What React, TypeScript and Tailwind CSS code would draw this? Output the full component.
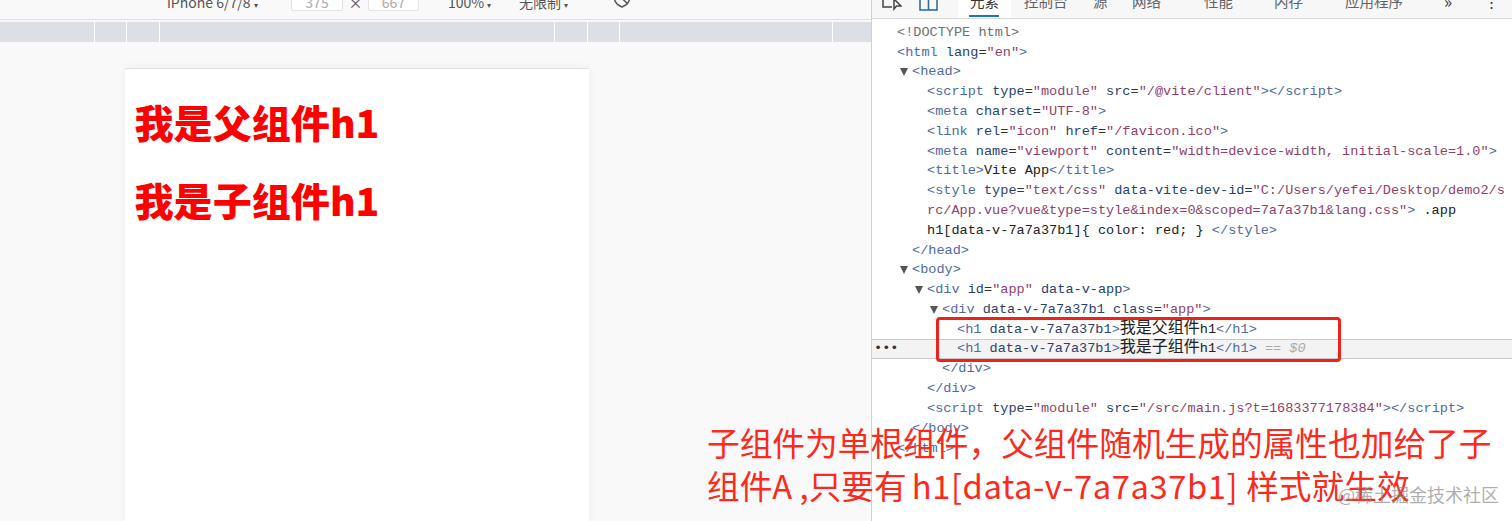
import React from "react";

const T = ({ children }: { children: React.ReactNode }) => <span className="text-[#4f6aa3]">{children}</span>;
const A = ({ children }: { children: React.ReactNode }) => <span className="text-[#2a3f6e]">{children}</span>;
const V = ({ children }: { children: React.ReactNode }) => <span className="text-[#8f3f6b]">{children}</span>;
const G = ({ children }: { children: React.ReactNode }) => <span className="text-[#6f6f6f]">{children}</span>;
const C = ({ children }: { children: React.ReactNode }) => <span className="text-[#222222]">{children}</span>;
const K = ({ children }: { children: React.ReactNode }) => <span className="text-[16px] leading-none text-[#222222]">{children}</span>;

function Row({ pad, open, selected, children }: { pad: string; open?: boolean; selected?: boolean; children: React.ReactNode }) {
  return (
    <div className={"relative flex h-[19.8px] items-center whitespace-pre " + pad + (selected ? " -mt-[1px] mb-[1px] border-y border-[#c9c9c9] bg-[#f3f3f3]" : "")}>
      {open && <span className="mr-[4px] -ml-[12px] h-0 w-0 border-x-[4px] border-t-[8px] border-x-transparent border-t-[#555555]" />}
      <span className="leading-[18px]">{children}</span>
    </div>
  );
}

function Ruler() {
  const ticks = ["w-[95px]", "w-[32px]", "w-[33px]", "w-[395px]", "w-[33px]", "w-[32px]", "w-[213px]", "flex-1"];
  return (
    <div className="mt-[2px] flex h-[20px] bg-[#dce0e6]">
      {ticks.map((w, i) => (
        <div key={i} className={w + (i < ticks.length - 1 ? " border-r border-white" : "")} />
      ))}
    </div>
  );
}

function Toolbar() {
  return (
    <div className="h-[20px] overflow-hidden border-b border-[#dedede] bg-[#f9f9f9]">
      <div className="-mt-[7px] flex h-[18px] items-center text-[14px] text-[#555555]">
        <span className="ml-[167px] w-[124px]">iPhone 6/7/8 <span className="text-[8px]">▾</span></span>
        <span className="flex h-[17px] w-[52px] items-center justify-center rounded-[2px] border border-[#e3e3e3] bg-white text-[#aaaaaa]">375</span>
        <span className="w-[25px] text-center">×</span>
        <span className="flex h-[17px] w-[51px] items-center justify-center rounded-[2px] border border-[#e3e3e3] bg-white text-[#aaaaaa]">667</span>
        <span className="ml-[29px] w-[71px]">100% <span className="text-[8px]">▾</span></span>
        <span className="w-[94px]">无限制 <span className="text-[8px]">▾</span></span>
        <svg className="-mt-[6px]" width="18" height="18" viewBox="0 0 18 18" fill="none" stroke="#555555" strokeWidth="1.5">
          <path d="M1 6 9 1l8 5c0 5-3 9-8 11C4 15 1 11 1 6z" />
          <path d="M3 3l12 11" />
        </svg>
      </div>
    </div>
  );
}

function DevTabs() {
  return (
    <div className="flex h-[19px] shrink-0 overflow-hidden border-b border-[#d8d8d8] bg-[#f7f7f7] text-[14.5px] text-[#5f6368]">
      <div className="-mt-[11px] flex h-[24px] w-full items-center">
        <svg className="ml-[10px]" width="20" height="20" viewBox="0 0 20 20" fill="none" stroke="#444444" strokeWidth="1.5">
          <path d="M1 4v12h9" />
          <path d="M12 8v10l2.500-3h4.500z" fill="#ffffff" />
        </svg>
        <svg className="ml-[17px]" width="19" height="20" viewBox="0 0 19 20" fill="none" stroke="#2f6f9f" strokeWidth="1.6">
          <rect x="1" y="1" width="17" height="18" />
          <path d="M9.500 1v18" />
        </svg>
        <div className="relative ml-[20px] h-[30px] w-[53px] self-start bg-white text-center leading-[24px] text-[#333333]">
          元素
          <span className="absolute bottom-[2px] left-[11px] h-[2px] w-[30px] bg-[#1a73c8]" />
        </div>
        <span className="ml-[13px]">控制台</span>
        <span className="ml-[25.5px]">源</span>
        <span className="ml-[24.5px]">网络</span>
        <span className="ml-[43px]">性能</span>
        <span className="ml-[41px]">内存</span>
        <span className="ml-[42px]">应用程序</span>
        <span className="ml-[41px] text-[17px] text-[#333333]">»</span>
        <span className="ml-[32px] text-[#333333]">⋮</span>
      </div>
    </div>
  );
}

export default function App() {
  return (
    <div className="relative flex h-[521px] w-[1512px] overflow-hidden bg-white font-['Noto_Sans_CJK_SC',sans-serif]">
      <div className="flex w-[871px] shrink-0 flex-col bg-[#f9f9f9]">
        <Toolbar />
        <Ruler />
        <div className="flex flex-1 justify-start pl-[125px] pt-[26px]">
          <div className="w-[464px] border-t border-[#e0e0e0] bg-white px-[9.500px] pt-[23px] text-[39.100px] font-black leading-[58px] text-[#ff0000] shadow-[0_0_8px_rgba(0,0,0,0.06)]">
            <h1>我是父组件h1</h1>
            <h1 className="mt-[20px]">我是子组件h1</h1>
          </div>
        </div>
      </div>

      <div className="flex min-w-0 flex-1 flex-col border-l border-[#d0d0d0]">
        <DevTabs />
        <div className="pt-[4px] font-['Liberation_Mono','Noto_Sans_CJK_SC',monospace] text-[13.570px] text-[#333333]">
          <Row pad="pl-[25px]"><G>{"<!DOCTYPE html>"}</G></Row>
          <Row pad="pl-[25px]"><T>{"<html"}</T> <A>lang</A>=<V>"en"</V><T>{">"}</T></Row>
          <Row pad="pl-[40px]" open><T>{"<head>"}</T></Row>
          <Row pad="pl-[55px]"><T>{"<script"}</T> <A>type</A>=<V>"module"</V> <A>src</A>=<V>"/@vite/client"</V><T>{"></script>"}</T></Row>
          <Row pad="pl-[55px]"><T>{"<meta"}</T> <A>charset</A>=<V>"UTF-8"</V><T>{">"}</T></Row>
          <Row pad="pl-[55px]"><T>{"<link"}</T> <A>rel</A>=<V>"icon"</V> <A>href</A>=<V>"/favicon.ico"</V><T>{">"}</T></Row>
          <Row pad="pl-[55px]"><T>{"<meta"}</T> <A>name</A>=<V>"viewport"</V> <A>content</A>=<V>"width=device-width, initial-scale=1.0"</V><T>{">"}</T></Row>
          <Row pad="pl-[55px]"><T>{"<title>"}</T><C>Vite App</C><T>{"</title>"}</T></Row>
          <Row pad="pl-[55px]"><T>{"<style"}</T> <A>type</A>=<V>"text/css"</V> <A>data-vite-dev-id</A>=<V>"C:/Users/yefei/Desktop/demo2/s</V></Row>
          <Row pad="pl-[55px]"><V>rc/App.vue?vue&amp;type=style&amp;index=0&amp;scoped=7a7a37b1&amp;lang.css"</V><T>{">"}</T><C> .app</C></Row>
          <Row pad="pl-[55px]"><C>{"h1[data-v-7a7a37b1]{ color: red; } "}</C><T>{"</style>"}</T></Row>
          <Row pad="pl-[40px]"><T>{"</head>"}</T></Row>
          <Row pad="pl-[40px]" open><T>{"<body>"}</T></Row>
          <Row pad="pl-[55px]" open><T>{"<div"}</T> <A>id</A>=<V>"app"</V> <A>data-v-app</A><T>{">"}</T></Row>
          <Row pad="pl-[70px]" open><T>{"<div"}</T> <A>data-v-7a7a37b1</A> <A>class</A>=<V>"app"</V><T>{">"}</T></Row>
          <Row pad="pl-[85px]"><T>{"<h1"}</T> <A>data-v-7a7a37b1</A><T>{">"}</T><K>我是父组件</K><C>h1</C><T>{"</h1>"}</T></Row>
          <Row pad="pl-[85px]" selected>
            <span className="absolute left-[2px] text-[#333333]">•••</span>
            <T>{"<h1"}</T> <A>data-v-7a7a37b1</A><T>{">"}</T><K>我是子组件</K><C>h1</C><T>{"</h1>"}</T><span className="italic text-[#aaaaaa]"> == $0</span>
          </Row>
          <Row pad="pl-[70px]"><T>{"</div>"}</T></Row>
          <Row pad="pl-[55px]"><T>{"</div>"}</T></Row>
          <Row pad="pl-[55px]"><T>{"<script"}</T> <A>type</A>=<V>"module"</V> <A>src</A>=<V>"/src/main.js?t=1683377178384"</V><T>{"></script>"}</T></Row>
          <Row pad="pl-[40px]"><T>{"</body>"}</T></Row>
          <Row pad="pl-[25px]"><T>{"</html>"}</T></Row>
        </div>
      </div>

      <div className="absolute left-[936px] top-[317px] h-[45px] w-[405px] rounded-[4px] border-[3px] border-[#f0201a]" />

      <div className="absolute left-[707px] top-[420px] w-[800px] text-[32.700px] leading-[43px] text-[#fb2a1c]">
        <div className="whitespace-nowrap">子组件为单根组件，父组件随机生成的属性也加给了子</div>
        <div className="whitespace-nowrap">组件A ,只要有<span className="ml-[5px] tracking-[0.600px]">h1[data-v-7a7a37b1] </span>样式就生效</div>
      </div>

      <div className="absolute left-[1338px] top-[481px] whitespace-nowrap text-[18px] text-[#8a8a8a]/70">@稀土掘金技术社区</div>
    </div>
  );
}
